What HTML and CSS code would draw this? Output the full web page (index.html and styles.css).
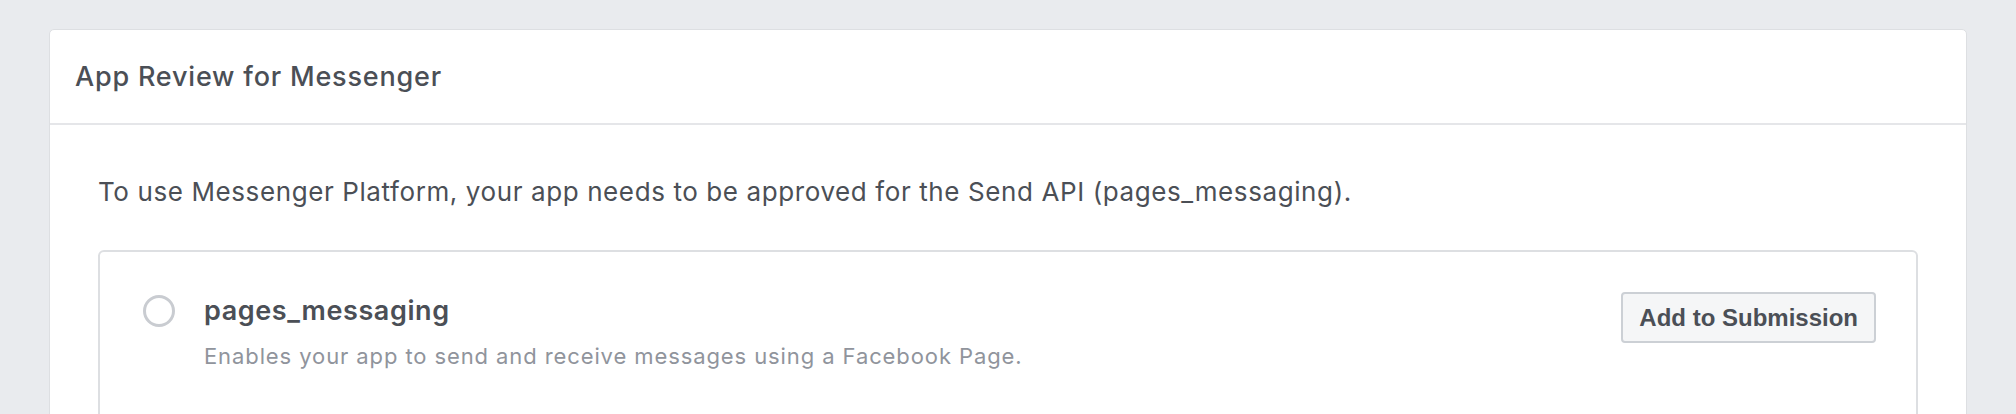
FILE: index.html
```html
<!DOCTYPE html>
<html lang="en">
<head>
    <meta charset="UTF-8">
    <meta name="viewport" content="width=device-width, initial-scale=1.0">
    <title>App Review for Messenger</title>
    <link rel="stylesheet" href="styles.css">
</head>
<body>
    <section class="panel">
        <header class="panel-head">App Review for Messenger</header>
        <div class="panel-body">
            <p class="intro">To use Messenger Platform, your app needs to be approved for the Send API (pages_messaging).</p>
            <div class="perm">
                <span class="radio"></span>
                <div class="perm-text">
                    <div class="perm-name">pages_messaging</div>
                    <div class="perm-desc">Enables your app to send and receive messages using a Facebook Page.</div>
                </div>
                <button class="btn">Add to Submission</button>
            </div>
        </div>
    </section>
</body>
</html>
```

FILE: styles.css
```css
body{
    margin: 0;
    padding: 29px 49px 0;
    background-color: #e9ebee;
    font-family: Inter, "Noto Sans", sans-serif;
    color: #4b4f56;
}
.panel{
    background-color: #fff;
    border: 1px solid #dddfe2;
    border-radius: 5px;
}
.panel-head{
    height: 93px;
    display: flex;
    align-items: center;
    padding-left: 25px;
    border-bottom: 2px solid #e5e6e9;
    font-size: 27px;
    font-weight: 500;
    letter-spacing: 0.8px;
}
.panel-body{
    padding: 50px 48px 40px;
}
.intro{
    margin: 0 0 41px;
    font-size: 26px;
    line-height: 34px;
    letter-spacing: 0.6px;
}
.perm{
    display: flex;
    align-items: flex-start;
    padding: 40px 40px 60px 43px;
    border: 2px solid #dddfe2;
    border-radius: 6px;
}
.radio{
    flex: none;
    width: 26px;
    height: 26px;
    margin-top: 3px;
    border: 3px solid #c9ccd1;
    border-radius: 50%;
}
.perm-text{
    margin-left: 29px;
    margin-top: 3px;
}
.perm-name{
    font-size: 27px;
    font-weight: 600;
    line-height: 32px;
    letter-spacing: 0.6px;
}
.perm-desc{
    margin-top: 14px;
    font-size: 22px;
    line-height: 30px;
    letter-spacing: 0.9px;
    color: #90949c;
}
.btn{
    margin-left: auto;
    height: 51px;
    padding: 0 16px;
    background-color: #f5f6f7;
    border: 2px solid #ccd0d5;
    border-radius: 4px;
    font-family: "Liberation Sans", Arial, sans-serif;
    font-size: 24px;
    font-weight: bold;
    color: #4b4f56;
}
```
